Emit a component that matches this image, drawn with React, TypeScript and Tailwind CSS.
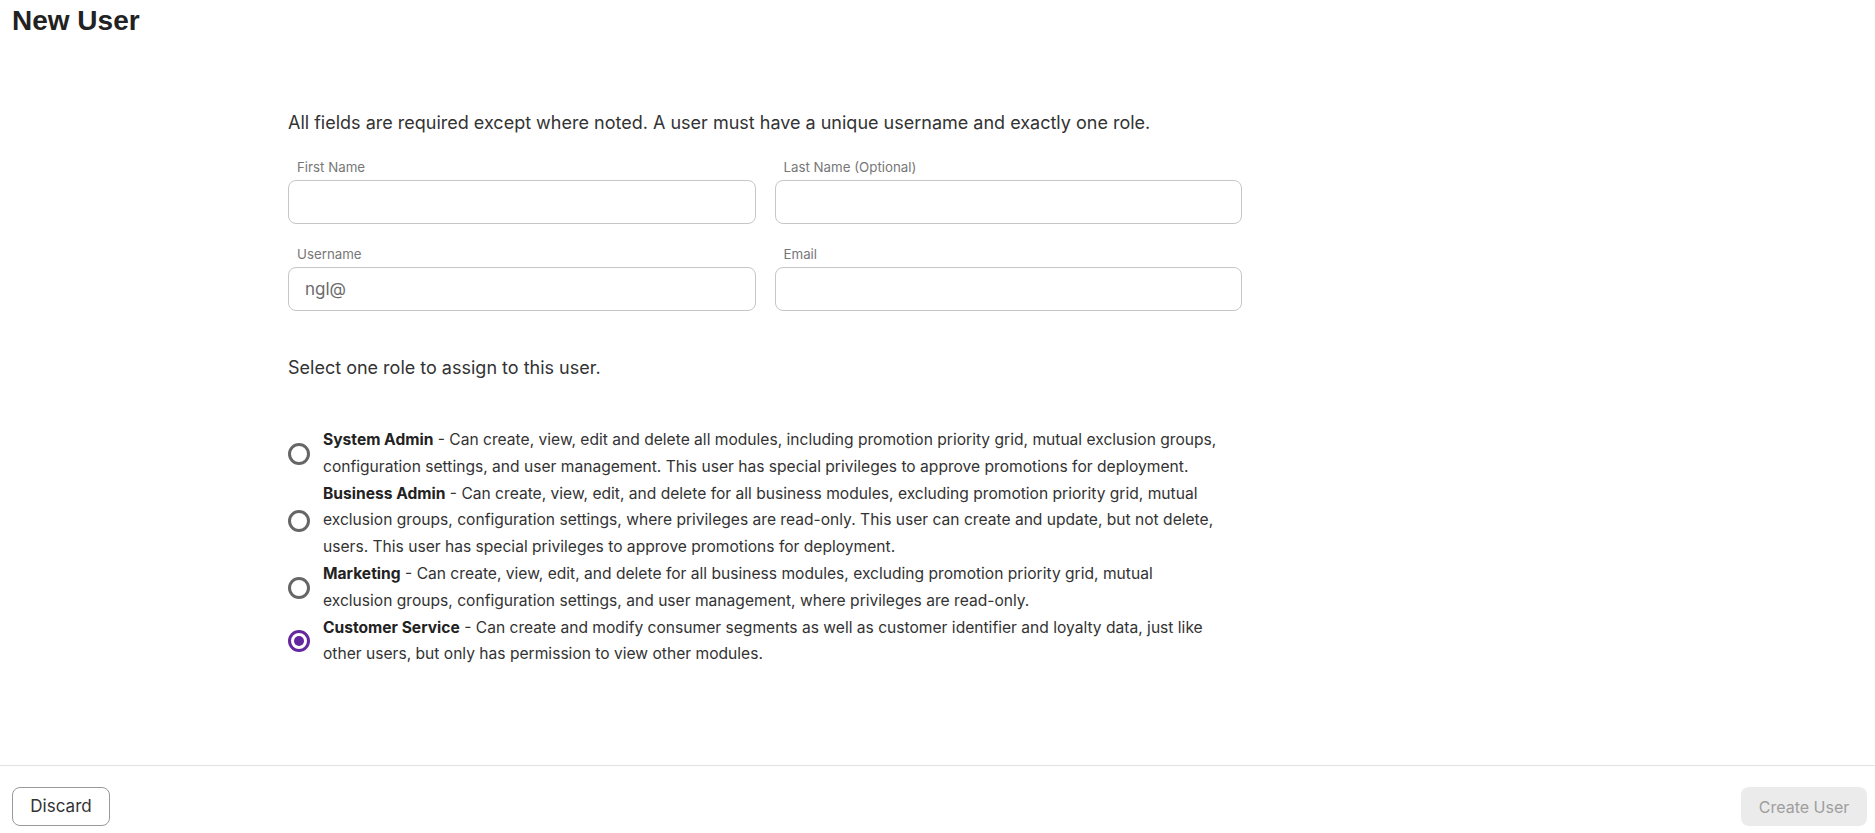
import { useState } from 'react'

const roles = [
  {
    id: 'system',
    name: 'System Admin',
    text: 'Can create, view, edit and delete all modules, including promotion priority grid, mutual exclusion groups, configuration settings, and user management. This user has special privileges to approve promotions for deployment.',
  },
  {
    id: 'business',
    name: 'Business Admin',
    text: 'Can create, view, edit, and delete for all business modules, excluding promotion priority grid, mutual exclusion groups, configuration settings, where privileges are read-only. This user can create and update, but not delete, users. This user has special privileges to approve promotions for deployment.',
  },
  {
    id: 'marketing',
    name: 'Marketing',
    text: 'Can create, view, edit, and delete for all business modules, excluding promotion priority grid, mutual exclusion groups, configuration settings, and user management, where privileges are read-only.',
  },
  {
    id: 'cs',
    name: 'Customer Service',
    text: 'Can create and modify consumer segments as well as customer identifier and loyalty data, just like other users, but only has permission to view other modules.',
  },
]

function Field({ label, value }: { label: string; value?: string }) {
  return (
    <div className="flex flex-col">
      <label className="pl-[9px] text-[13.3px] leading-[18px] text-[#777] mb-[4px]">{label}</label>
      <input
        defaultValue={value}
        className="h-[44px] rounded-lg border border-[#c6c6c6] px-[16px] text-[17px] text-[#6b6b6b] outline-none"
      />
    </div>
  )
}

export default function App() {
  const [role, setRole] = useState('cs')

  return (
    <div className="h-screen flex flex-col bg-white text-[#333] font-['Inter','Liberation_Sans',sans-serif]">
      <h1 className="px-3 pt-[4px] text-[28px] leading-[34px] font-bold text-[#222] font-['Liberation_Sans',Arial,sans-serif]">New User</h1>

      <main className="ml-[288px] w-[954px] pt-[73px]">
        <p className="text-[18px] leading-[24px]">All fields are required except where noted. A user must have a unique username and exactly one role.</p>

        <div className="grid grid-cols-2 gap-x-[19px] gap-y-[21px] mt-[23px]">
          <Field label="First Name" />
          <Field label="Last Name (Optional)" />
          <Field label="Username" value="ngl@" />
          <Field label="Email" />
        </div>

        <p className="mt-[45px] text-[18px] leading-[24px]">Select one role to assign to this user.</p>

        <div className="mt-[47px] flex flex-col">
          {roles.map((r) => {
            const checked = role === r.id
            return (
              <label key={r.id} className="flex items-center cursor-pointer" onClick={() => setRole(r.id)}>
                <span className="w-[35px] shrink-0">
                  <span
                    className={
                      checked
                        ? 'flex items-center justify-center w-[22px] h-[22px] rounded-full border-[3px] border-[#63289f]'
                        : 'flex items-center justify-center w-[22px] h-[22px] rounded-full border-[3px] border-[#666]'
                    }
                  >
                    {checked && <span className="w-[10px] h-[10px] rounded-full bg-[#63289f]" />}
                  </span>
                </span>
                <span className="w-[901px] text-[15.6px] leading-[26.8px] text-[#333]">
                  <span className="font-bold text-[#222]">{r.name}</span> - {r.text}
                </span>
              </label>
            )
          })}
        </div>
      </main>

      <footer className="mt-auto border-t border-[#e2e2e2] pt-[21px] pb-[7px] pl-3 pr-2 flex justify-between">
        <button className="h-[39px] w-[98px] rounded-lg border border-[#999] bg-white text-[17px] text-[#333]">Discard</button>
        <button disabled className="h-[39px] w-[126px] rounded-lg bg-[#ebebeb] text-[16px] text-[#9e9e9e]">Create User</button>
      </footer>
    </div>
  )
}
